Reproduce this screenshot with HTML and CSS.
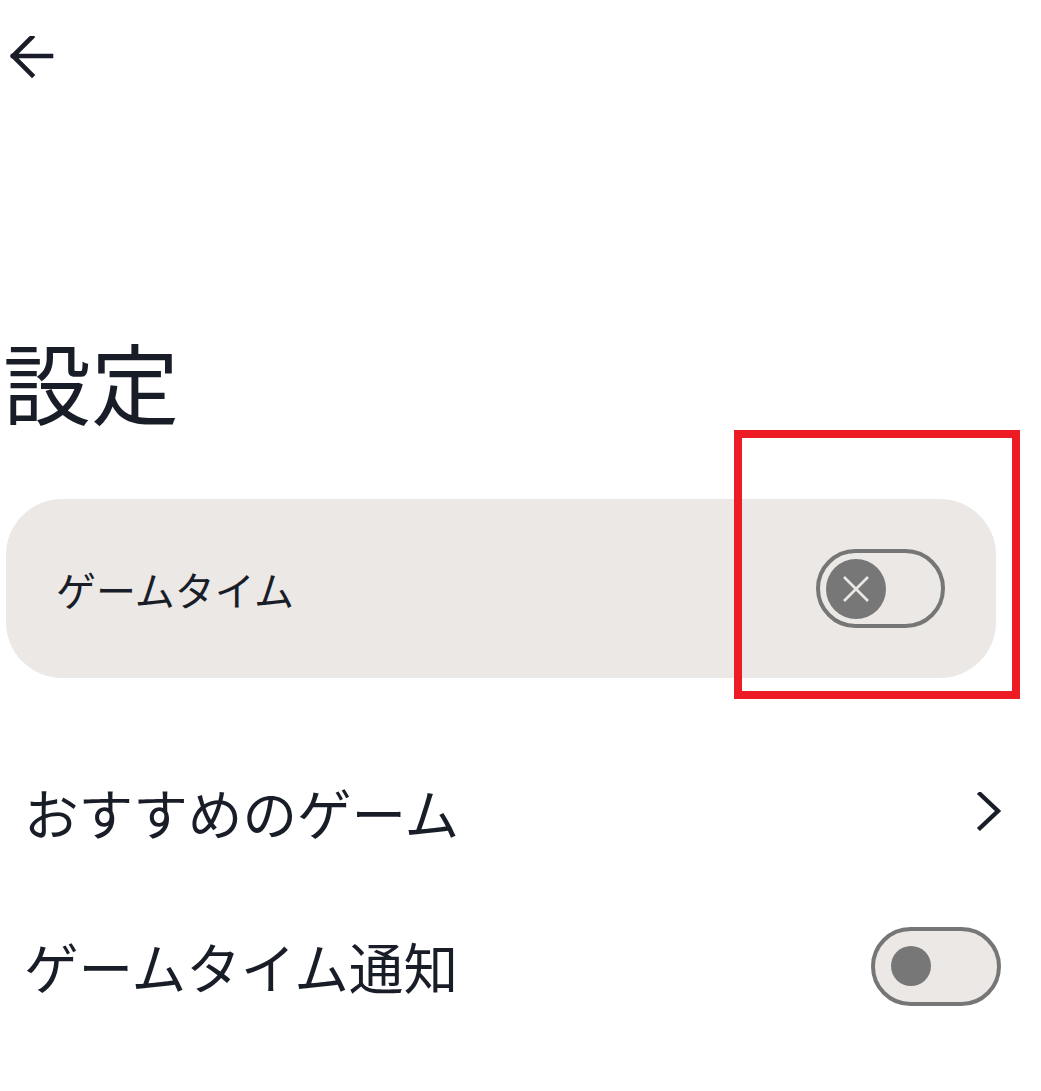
FILE: index.html
```html
<!DOCTYPE html>
<html lang="ja">
<head>
<meta charset="utf-8">
<title>設定</title>
<link rel="stylesheet" href="styles.css">
</head>
<body>
<div class="page">
  <header class="topbar">
    <svg class="back" width="44" height="44" viewBox="0 0 44 44" aria-hidden="true">
      <path d="M41 20H3M22 1L3 20l19 19" fill="none" stroke="#191d28" stroke-width="4.6" stroke-linecap="square" stroke-linejoin="miter"/>
    </svg>
  </header>

  <h1 class="title">設定</h1>

  <section class="card">
    <span class="card-label">ゲームタイム</span>
    <div class="switch switch-x">
      <span class="knob knob-x">
        <svg width="26" height="26" viewBox="0 0 26 26" aria-hidden="true">
          <path d="M1 1L25 25M25 1L1 25" stroke="#ebe8e5" stroke-width="2.6" fill="none"/>
        </svg>
      </span>
    </div>
  </section>

  <div class="list">
    <div class="row">
      <span class="row-label">おすすめのゲーム</span>
      <svg class="chev" width="26" height="40" viewBox="0 0 26 40" aria-hidden="true">
        <path d="M4 2L22 19L4 36" fill="none" stroke="#191d28" stroke-width="4.4" stroke-linecap="square" stroke-linejoin="miter"/>
      </svg>
    </div>
    <div class="row">
      <span class="row-label">ゲームタイム通知</span>
      <div class="switch switch-off">
        <span class="knob knob-small"></span>
      </div>
    </div>
  </div>

  <div class="highlight"></div>
</div>
</body>
</html>
```

FILE: styles.css
```css
html, body {
  margin: 0;
  padding: 0;
  background: #ffffff;
}

body {
  font-family: "Noto Sans CJK JP", "Noto Sans", sans-serif;
  color: #191d28;
}

.page {
  position: relative;
  width: 1041px;
  height: 1091px;
  overflow: hidden;
}

.topbar {
  height: 116px;
  display: flex;
  align-items: center;
  padding-left: 10px;
}

.back {
  display: block;
}

.title {
  margin: 220px 0 0 0;
  padding-left: 3px;
  font-size: 88px;
  line-height: 88px;
  font-weight: 400;
  height: 88px;
}

.card {
  margin: 75px 45px 0 6px;
  height: 179px;
  border-radius: 56px;
  background: #ebe8e5;
  display: flex;
  align-items: center;
  justify-content: space-between;
  padding: 0 51px 0 50px;
}

.card-label {
  font-size: 40px;
  line-height: 1;
}

.switch {
  box-sizing: border-box;
  border: 4px solid #767676;
  border-radius: 40px;
  display: flex;
  align-items: center;
  background: #ebe8e5;
}

.switch-x {
  width: 129px;
  height: 79px;
  padding-left: 6px;
}

.switch-off {
  width: 130px;
  height: 79px;
  padding-left: 16px;
}

.knob {
  display: flex;
  align-items: center;
  justify-content: center;
  border-radius: 50%;
  background: #777777;
}

.knob-x {
  width: 60px;
  height: 60px;
}

.knob-small {
  width: 40px;
  height: 40px;
}

.list {
  margin-top: 57px;
  padding: 0 40px 0 24px;
}

.row {
  height: 154px;
  display: flex;
  align-items: center;
  justify-content: space-between;
}

.row-label {
  font-size: 54.6px;
  line-height: 1;
}

.chev {
  display: block;
  margin-right: -1px;
}

.highlight {
  position: absolute;
  left: 734px;
  top: 430px;
  width: 286px;
  height: 269px;
  box-sizing: border-box;
  border: 8px solid #ed1c24;
  pointer-events: none;
}
```
